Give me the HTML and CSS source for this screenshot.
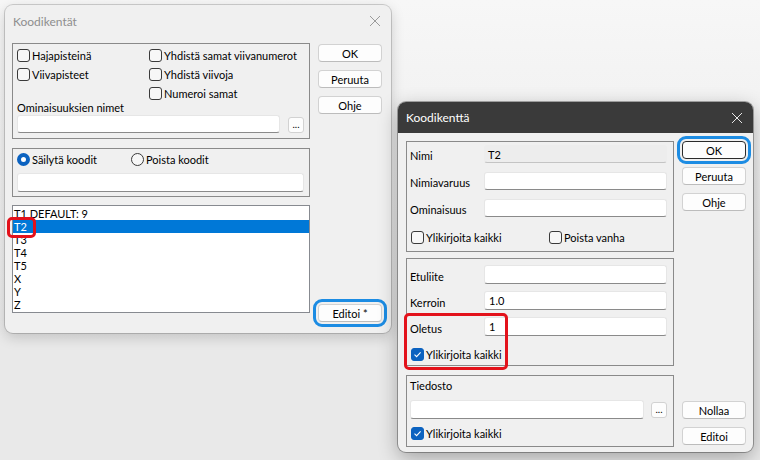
FILE: index.html
```html
<!DOCTYPE html>
<html lang="fi">
<head>
	<meta charset="UTF-8">
	<title>Koodikentät</title>
	<link rel="stylesheet" href="styles.css">
</head>
<body>
	<div class="desk">

		<!-- Koodikentät: inactive parent dialog -->
		<section class="dialog dlg-fields">
			<header class="titlebar">
				<span class="title">Koodikentät</span>
				<svg class="close" width="12" height="12" viewBox="0 0 12 12"><path d="M1 1 L11 11 M11 1 L1 11" /></svg>
			</header>
			<div class="dlg-body">
				<div class="main-col">
					<div class="group g-options">
						<div class="checks">
							<div class="check"><span class="box"></span>Hajapisteinä</div>
							<div class="check"><span class="box"></span>Yhdistä samat viivanumerot</div>
							<div class="check"><span class="box"></span>Viivapisteet</div>
							<div class="check"><span class="box"></span>Yhdistä viivoja</div>
							<div></div>
							<div class="check"><span class="box"></span>Numeroi samat</div>
						</div>
						<div class="caption">Ominaisuuksien nimet</div>
						<div class="input-row">
							<div class="input wide"></div>
							<span class="dots">...</span>
						</div>
					</div>

					<div class="group g-keep">
						<div class="radios">
							<div class="radio on"><span class="dot"></span>Säilytä koodit</div>
							<div class="radio"><span class="dot"></span>Poista koodit</div>
						</div>
						<div class="input full"></div>
					</div>

					<div class="listbox">
						<div class="item">T1 DEFAULT: 9</div>
						<div class="item selected">T2</div>
						<div class="item">T3</div>
						<div class="item">T4</div>
						<div class="item">T5</div>
						<div class="item">X</div>
						<div class="item">Y</div>
						<div class="item">Z</div>
						<span class="mark-red mark-t2"></span>
					</div>
				</div>
				<div class="btn-col">
					<span class="btn">OK</span>
					<span class="btn">Peruuta</span>
					<span class="btn">Ohje</span>
					<span class="btn push mark-blue">Editoi *</span>
				</div>
			</div>
		</section>

		<!-- Koodikenttä: active child dialog -->
		<section class="dialog dlg-field active">
			<header class="titlebar">
				<span class="title">Koodikenttä</span>
				<svg class="close" width="12" height="12" viewBox="0 0 12 12"><path d="M1 1 L11 11 M11 1 L1 11" /></svg>
			</header>
			<div class="dlg-body">
				<div class="main-col">
					<div class="group g-name">
						<div class="form">
							<span class="lbl">Nimi</span><div class="input disabled">T2</div>
							<span class="lbl">Nimiavaruus</span><div class="input"></div>
							<span class="lbl">Ominaisuus</span><div class="input"></div>
						</div>
						<div class="check-row">
							<div class="check w138"><span class="box"></span>Ylikirjoita kaikki</div>
							<div class="check"><span class="box"></span>Poista vanha</div>
						</div>
					</div>

					<div class="group g-values">
						<div class="form loose">
							<span class="lbl">Etuliite</span><div class="input"></div>
							<span class="lbl">Kerroin</span><div class="input">1.0</div>
							<span class="lbl">Oletus</span><div class="input">1</div>
						</div>
						<div class="check-row">
							<div class="check"><span class="box on"></span>Ylikirjoita kaikki</div>
						</div>
						<span class="mark-red mark-oletus"></span>
					</div>

					<div class="group g-file">
						<div class="caption">Tiedosto</div>
						<div class="input-row">
							<div class="input file"></div>
							<span class="dots">...</span>
						</div>
						<div class="check-row">
							<div class="check"><span class="box on"></span>Ylikirjoita kaikki</div>
						</div>
					</div>
				</div>
				<div class="btn-col">
					<span class="btn default mark-blue">OK</span>
					<span class="btn">Peruuta</span>
					<span class="btn">Ohje</span>
					<span class="btn push">Nollaa</span>
					<span class="btn">Editoi</span>
				</div>
			</div>
		</section>

	</div>
</body>
</html>
```

FILE: styles.css
```css
* {
	box-sizing: border-box;
}
body {
	margin: 0;
	background: #ececec;
	font-family: Lato, "Noto Sans", sans-serif;
	font-size: 11px;
	color: #000;
	overflow: hidden;
}
.desk {
	position: relative;
	width: 760px;
	height: 460px;
	background: linear-gradient(#f7f7f7 0, #f3f3f3 90px, #e9e9e9 340px);
}

/** Windows */
.dialog {
	position: absolute;
	display: flex;
	flex-direction: column;
	background: #f0f0f0;
	border-radius: 8px;
	box-shadow: 0 0 0 1px rgba(0, 0, 0, .16), 0 4px 14px rgba(0, 0, 0, .18);
	overflow: hidden;
}
.dlg-fields {
	left: 5px;
	top: 5px;
	width: 386px;
	height: 328px;
}
.dlg-field {
	left: 398px;
	top: 102px;
	width: 355px;
	height: 350px;
	box-shadow: 0 0 0 1px rgba(0, 0, 0, .3), 0 6px 20px rgba(0, 0, 0, .3);
}
.titlebar {
	display: flex;
	align-items: center;
	justify-content: space-between;
	height: 32px;
	padding: 0 10px 0 8px;
	flex: none;
}
.title {
	color: #8e8e8e;
	font-size: 12px;
}
.close path {
	stroke: #9a9a9a;
	stroke-width: 1;
	fill: none;
}
.active .titlebar {
	height: 31px;
	background: #3a3a3a;
}
.active .title {
	color: #fff;
}
.active .close path {
	stroke: #e8e8e8;
}

.dlg-body {
	flex: 1;
	display: flex;
	gap: 8px;
}
.dlg-fields .dlg-body {
	padding: 6px 9px 11px 7px;
}
.dlg-field .dlg-body {
	padding: 8px 7px 5px 8px;
}
.main-col {
	display: flex;
	flex-direction: column;
}
.dlg-fields .main-col {
	width: 298px;
}
.dlg-field .main-col {
	width: 268px;
}
.btn-col {
	display: flex;
	flex-direction: column;
	gap: 8px;
	width: 64px;
	padding-top: 1px;
}
.dlg-field .btn-col {
	margin-top: -1px;
	padding-bottom: 2px;
}
.btn-col .push {
	margin-top: auto;
}

/** Controls */
.group {
	position: relative;
	border: 1px solid #8a8a8a;
}
.btn {
	display: flex;
	align-items: center;
	justify-content: center;
	height: 18px;
	background: #fdfdfd;
	border: 1px solid #d2d2d2;
	border-bottom-color: #bcbcbc;
	border-radius: 4px;
}
.btn.default {
	border-color: #2b2b2b;
}
.mark-blue {
	outline: 3px solid #1c8ce3;
	outline-offset: 2px;
}
.mark-red {
	position: absolute;
	border: 3px solid #e3121b;
	border-radius: 5px;
	pointer-events: none;
}

.check,
.radio {
	display: flex;
	align-items: center;
	gap: 2px;
	height: 13px;
	white-space: nowrap;
}
.box,
.dot {
	flex: none;
	width: 13px;
	height: 13px;
	border: 1px solid #3a3a3a;
	border-radius: 3px;
	background: #f7f7f7;
}
.box.on {
	border-color: #0b62c0;
	background: #0b62c0 url("data:image/svg+xml,%3Csvg xmlns='http://www.w3.org/2000/svg' width='11' height='11' viewBox='0 0 11 11'%3E%3Cpath d='M2.5 5.6 L4.6 7.6 L8.6 3.4' fill='none' stroke='white' stroke-width='1.1'/%3E%3C/svg%3E") center / 11px 11px no-repeat;
}
.dot {
	border-radius: 50%;
}
.radio.on .dot {
	border: 4px solid #0b62c0;
	background: #fff;
}

.input {
	height: 18px;
	padding: 1px 4px 0;
	background: #fff;
	border: 1px solid #e6e6e6;
	border-bottom-color: #8a8a8a;
	border-radius: 3px;
	line-height: 15px;
}
.input.disabled {
	background: #ededed;
	border-color: #ededed;
	border-bottom-color: #c4c4c4;
	padding-left: 3px;
}
.dots {
	display: flex;
	align-items: flex-end;
	justify-content: center;
	width: 16px;
	height: 16px;
	padding-bottom: 3px;
	background: #fdfdfd;
	border: 1px solid #d2d2d2;
	border-radius: 3px;
	font-size: 10px;
	line-height: 1;
}
.input-row {
	display: flex;
	align-items: flex-end;
}
.caption {
	height: 14px;
	line-height: 14px;
}

/** Koodikentät */
.g-options {
	height: 96px;
	padding: 5px 5px 0 4px;
}
.checks {
	display: grid;
	grid-template-columns: 132px 1fr;
	row-gap: 6px;
}
.g-options .caption {
	margin-top: 1px;
}
.g-options .wide {
	width: 263px;
	margin-right: 8px;
}
.g-keep {
	height: 49px;
	margin-top: 9px;
	padding: 4px 5px 0 4px;
}
.radios {
	display: flex;
	margin-bottom: 7px;
}
.radios .radio:first-child {
	width: 114px;
}
.g-keep .input {
	height: 19px;
}
.listbox {
	position: relative;
	height: 108px;
	margin-top: 8px;
	padding: 1px 0 0 0;
	background: #fff;
	border: 1px solid #878a90;
}
.item {
	height: 13px;
	line-height: 13px;
	padding-left: 1px;
}
.item.selected {
	background: #0078d7;
	color: #fff;
}
.mark-t2 {
	left: -6px;
	top: 11px;
	width: 29px;
	height: 21px;
}

/** Koodikenttä */
.form {
	display: grid;
	grid-template-columns: 74px 183px;
	row-gap: 9px;
}
.lbl {
	align-self: end;
	line-height: 14px;
}
.g-name {
	height: 111px;
	padding: 3px 6px 0 3px;
}
.g-name .check-row {
	margin-top: 14px;
}
.check-row {
	display: flex;
	padding-left: 1px;
}
.w138 {
	width: 138px;
}
.g-values {
	height: 108px;
	margin-top: 6px;
	padding: 6px 6px 0 3px;
}
.form.loose {
	row-gap: 7px;
}
.form.loose .input {
	height: 19px;
}
.g-values .check-row {
	margin-top: 12px;
}
.mark-oletus {
	left: -3px;
	top: 54px;
	width: 104px;
	height: 57px;
}
.g-file {
	height: 72px;
	margin-top: 9px;
	padding: 3px 6px 0 3px;
}
.g-file .input-row {
	margin-top: 7px;
}
.g-file .file {
	width: 234px;
	height: 19px;
	margin-right: 7px;
}
.g-file .dots {
	margin-bottom: 1px;
}
.g-file .check-row {
	margin-top: 8px;
}
```
